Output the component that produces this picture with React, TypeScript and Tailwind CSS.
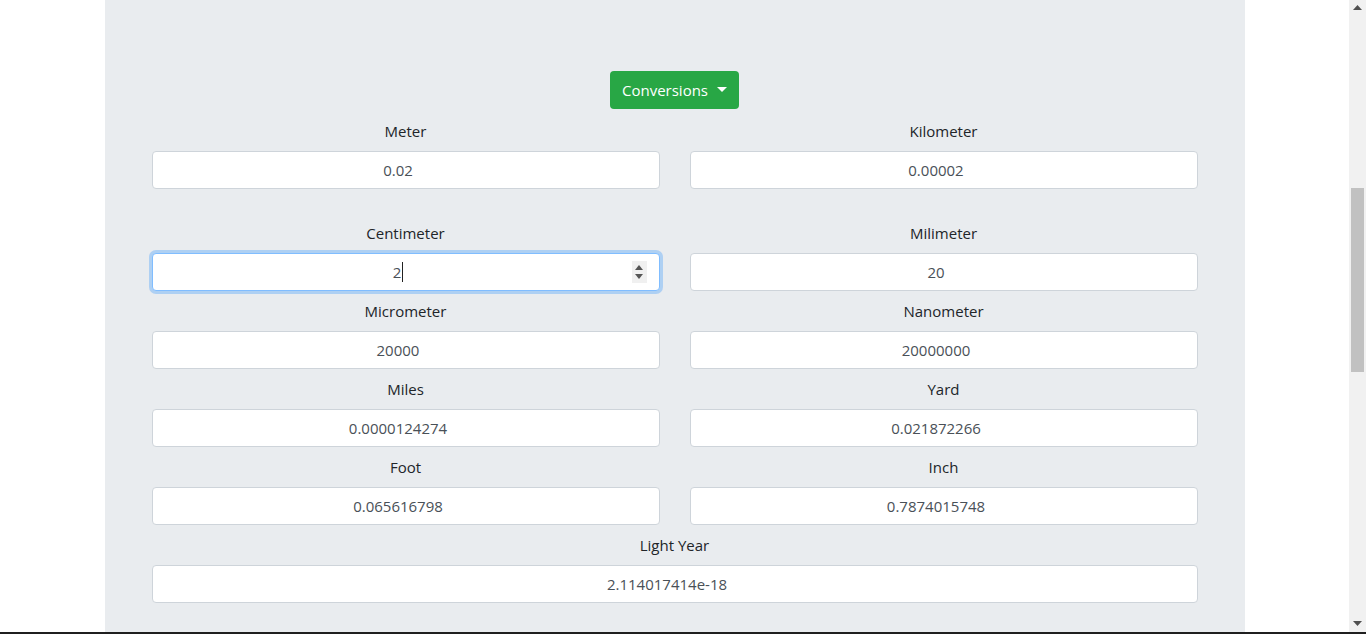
import React from "react";

const rows: { label: string; value: string; focus?: boolean }[][] = [
  [
    { label: "Meter", value: "0.02" },
    { label: "Kilometer", value: "0.00002" },
  ],
  [
    { label: "Centimeter", value: "2", focus: true },
    { label: "Milimeter", value: "20" },
  ],
  [
    { label: "Micrometer", value: "20000" },
    { label: "Nanometer", value: "20000000" },
  ],
  [
    { label: "Miles", value: "0.0000124274" },
    { label: "Yard", value: "0.021872266" },
  ],
  [
    { label: "Foot", value: "0.065616798" },
    { label: "Inch", value: "0.7874015748" },
  ],
];

function Field({ label, value, focus }: { label: string; value: string; focus?: boolean }) {
  return (
    <div className="flex flex-col items-center">
      <label className="h-6 leading-6 mb-2 text-[#212529]">{label}</label>
      {focus ? (
        <div className="relative w-full h-[38px] bg-white rounded border border-[#80bdff] shadow-[0_0_0_3px_rgba(0,123,255,0.25)] flex items-center justify-center pl-3 pr-[27px] text-[#495057]">
          <span className="flex items-center">
            2<span className="w-px h-[20px] bg-[#222] ml-px" />
          </span>
          <div className="absolute right-[12px] top-[7px] w-[15px] h-[22px] bg-[#f0f0f0] flex flex-col items-center justify-center gap-[4px]">
            <svg width="8" height="5" viewBox="0 0 8 5">
              <path d="M0 5 L4 0 L8 5 Z" fill="#555" />
            </svg>
            <svg width="8" height="5" viewBox="0 0 8 5">
              <path d="M0 0 L8 0 L4 5 Z" fill="#555" />
            </svg>
          </div>
        </div>
      ) : (
        <input
          readOnly
          value={value}
          className="w-full h-[38px] bg-white rounded border border-[#ced4da] pl-3 pr-[27px] text-center text-[#495057] outline-none"
        />
      )}
    </div>
  );
}

export default function App() {
  return (
    <div
      className="flex h-[634px] w-[1366px] overflow-hidden bg-white text-[15px]"
      style={{ fontFamily: '"Open Sans", "Noto Sans", sans-serif' }}
    >
      <div className="flex-1 flex flex-col">
        <div className="flex-1 flex justify-center overflow-hidden">
          <div className="w-[1140px] bg-[#e9ecef] px-[47px] pt-[71px]">
            <div className="flex justify-center mb-[10px]">
              <button className="h-[38px] w-[129px] rounded bg-[#28a745] text-white flex items-center justify-center gap-[9px]">
                Conversions
                <svg width="10" height="6" viewBox="0 0 10 6">
                  <path d="M0 0 L10 0 L5 5 Z" fill="#fff" />
                </svg>
              </button>
            </div>
            <div className="flex flex-col">
              {rows.map((r, i) => (
                <div
                  key={i}
                  className={`grid grid-cols-2 gap-x-[30px] ${i === 1 ? "mt-[32px]" : i > 1 ? "mt-2" : ""}`}
                >
                  {r.map((f) => (
                    <Field key={f.label} {...f} />
                  ))}
                </div>
              ))}
              <div className="mt-2">
                <Field label="Light Year" value="2.114017414e-18" />
              </div>
            </div>
          </div>
        </div>
      </div>
      <div className="w-[17px] bg-[#f1f1f1] flex flex-col items-center relative">
        <svg className="mt-[5px]" width="9" height="5" viewBox="0 0 9 5">
          <path d="M0 5 L4.5 0 L9 5 Z" fill="#505050" />
        </svg>
        <div className="absolute left-[2px] top-[188px] w-[13px] h-[184px] bg-[#c1c1c1]" />
        <svg className="absolute bottom-[8px]" width="9" height="5" viewBox="0 0 9 5">
          <path d="M0 0 L9 0 L4.5 5 Z" fill="#505050" />
        </svg>
      </div>
      <div className="absolute left-0 top-[632px] w-[1366px] h-[2px] bg-[#1f1f1f]" />
    </div>
  );
}
